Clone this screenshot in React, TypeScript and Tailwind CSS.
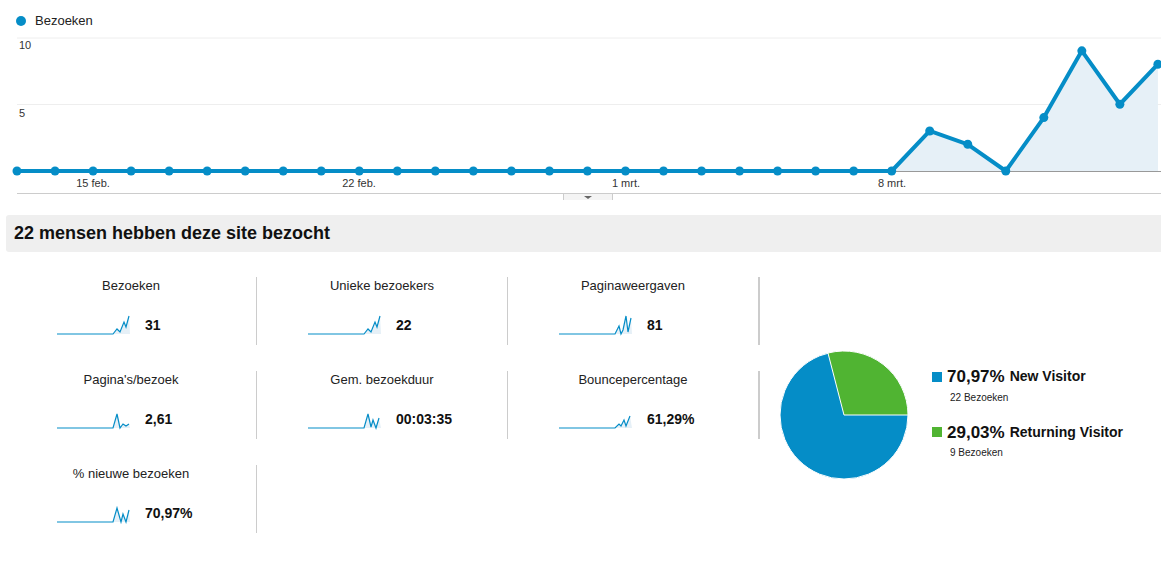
import React from "react";

const vals = [0,0,0,0,0,0,0,0,0,0,0,0,0,0,0,0,0,0,0,0,0,0,0,0,3,2,0,4,9,5,8];
const X = (i: number) => 17 + i * 38.03;
const Y = (v: number) => 171 - v * 13.35;

function Chart() {
  const pts = vals.map((v, i) => `${X(i)},${Y(v)}`).join(" ");
  return (
    <svg width="1161" height="200" className="block">
      <line x1="17" x2="1161" y1="38" y2="38" stroke="#eeeeee" />
      <line x1="17" x2="1161" y1="104.5" y2="104.5" stroke="#eeeeee" />
      <polygon points={`17,171 ${pts} 1158,171`} fill="#e6f0f7" />
      <line x1="17" x2="1161" y1="193.5" y2="193.5" stroke="#cccccc" />
      <line x1="17" x2="1161" y1="171.5" y2="171.5" stroke="#999" />
      <polyline points={pts} fill="none" stroke="#058dc7" strokeWidth="4" strokeLinejoin="round" />
      {vals.map((v, i) => <circle key={i} cx={X(i)} cy={Y(v)} r="4.5" fill="#058dc7" />)}
      <text x="19" y="49" fontSize="11" fill="#333">10</text>
      <text x="19" y="117" fontSize="11" fill="#333">5</text>
      {[["15 feb.", 93], ["22 feb.", 359], ["1 mrt.", 626], ["8 mrt.", 892]].map(([t, x]) => (
        <text key={t as string} x={x as number} y="187" fontSize="11" fill="#333" textAnchor="middle">{t}</text>
      ))}
      <rect x="563.5" y="193.5" width="49" height="8" fill="#f4f4f4" stroke="#ccc" />
      <path d="M584 196 L592 196 L588 199 Z" fill="#666" />
    </svg>
  );
}

function Spark({ d }: { d: string }) {
  return (
    <svg width="74" height="24" className="block">
      <path d={d + " L73,22 L0,22 Z"} fill="#e6f0f7" />
      <path d={d} fill="none" stroke="#058dc7" strokeWidth="1.2" />
    </svg>
  );
}

const sA = "M0,22 L56,22 L60,17 L63,20 L67,10 L69,15 L72,4";
const sB = "M0,22 L56,22 L60,8 L63,22 L66,18 L69,20 L72,18";
const sC = "M0,22 L56,22 L60,8 L63,21 L65,14 L68,22 L71,12";
const sD = "M0,22 L56,22 L60,18 L62,20 L65,14 L67,20 L71,10";
const sE = "M0,22 L56,22 L60,14 L62,22 L64,18 L67,4 L69,20 L72,6";
const sF = "M0,22 L56,22 L60,8 L64,22 L66,14 L69,22 L72,10";

const metrics: [string, string, string][][] = [
  [["Bezoeken", "31", sA], ["Unieke bezoekers", "22", sA], ["Paginaweergaven", "81", sE]],
  [["Pagina's/bezoek", "2,61", sB], ["Gem. bezoekduur", "00:03:35", sC], ["Bouncepercentage", "61,29%", sD]],
  [["% nieuwe bezoeken", "70,97%", sF]],
];

function Cell({ m }: { m: [string, string, string] }) {
  return (
    <div className="w-[251px] h-[68px] border-r border-[#cccccc] flex flex-col items-center pt-[1px]">
      <div className="text-[13px] text-[#222] leading-[15px]">{m[0]}</div>
      <div className="flex items-end gap-[14px] mt-[19px] self-start pl-[51px]">
        <Spark d={m[2]} />
        <div className="text-[14px] font-bold text-[#111] leading-[16px] mb-[3px]">{m[1]}</div>
      </div>
    </div>
  );
}

function Pie() {
  const cx = 845, cy = 412, r = 64;
  const a = (-14.5 * Math.PI) / 180;
  const sx = cx + r * Math.sin(a), sy = cy - r * Math.cos(a);
  return (
    <svg width="140" height="140" viewBox="775 342 140 140" className="block">
      <circle cx={cx} cy={cy} r={r} fill="#058dc7" stroke="#fff" strokeWidth="1" />
      <path d={`M${cx},${cy} L${sx},${sy} A${r},${r} 0 0 1 ${cx + r},${cy} Z`} fill="#50b432" stroke="#fff" strokeWidth="1" />
    </svg>
  );
}

export default function App() {
  return (
    <div className="w-[1161px] h-[564px] bg-white overflow-hidden" style={{ fontFamily: '"Liberation Sans", Arial, sans-serif' }}>
      <div className="flex items-center gap-[9px] pl-[16px] pt-[12px] h-[30px]">
        <span className="w-[10px] h-[10px] rounded-full bg-[#058dc7]" />
        <span className="text-[13px] text-[#222]">Bezoeken</span>
      </div>
      <div className="-mt-[30px]"><Chart /></div>
      <div className="mt-[15px] ml-[6px] h-[37px] bg-[#efefef] rounded-l-[3px] flex items-center pl-[8px]">
        <span className="text-[18px] font-bold text-[#111]">22 mensen hebben deze site bezocht</span>
      </div>
      <div className="flex ml-[6px] mt-[25px]">
        <div className="flex flex-col gap-[26px]">
          {metrics.map((row, i) => (
            <div key={i} className="flex">
              {row.map((m) => <Cell key={m[0]} m={m} />)}
              {i < 2 && <div className="w-[1px] h-[68px] bg-white" />}
            </div>
          ))}
        </div>
        <div className="flex flex-col">
          <div className="w-[1px] h-[68px] bg-[#cccccc] -ml-[1px]" />
          <div className="flex mt-[26px]">
            <div className="w-[1px] h-[68px] bg-[#cccccc] -ml-[1px]" />
          </div>
        </div>
        <div className="flex items-center mt-[68px] ml-[14px] gap-[18px] h-[140px]">
          <Pie />
          <div className="flex flex-col gap-[15px] -mt-[6px]">
            <div>
              <div className="flex items-center gap-[5px]">
                <span className="w-[10px] h-[10px] bg-[#058dc7]" />
                <span className="text-[17px] font-bold text-[#111]">70,97%</span>
                <span className="text-[14px] font-bold text-[#111]">New Visitor</span>
              </div>
              <div className="text-[10px] text-[#222] ml-[18px]">22 Bezoeken</div>
            </div>
            <div>
              <div className="flex items-center gap-[5px]">
                <span className="w-[10px] h-[10px] bg-[#50b432]" />
                <span className="text-[17px] font-bold text-[#111]">29,03%</span>
                <span className="text-[14px] font-bold text-[#111]">Returning Visitor</span>
              </div>
              <div className="text-[10px] text-[#222] ml-[18px]">9 Bezoeken</div>
            </div>
          </div>
        </div>
      </div>
    </div>
  );
}
